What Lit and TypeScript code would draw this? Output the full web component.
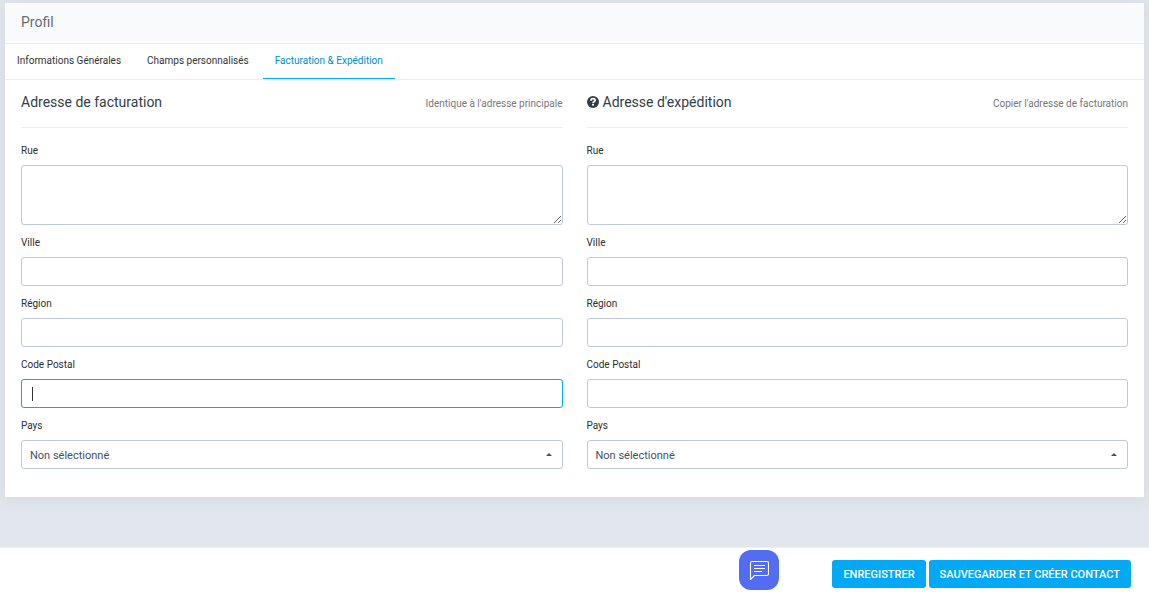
import { LitElement, html, css } from "lit";
import { customElement, property, query, state } from "lit/decorators.js";
import { classMap } from "lit/directives/class-map.js";

const TABS = ["Informations Générales", "Champs personnalisés", "Facturation & Expédition"];

@customElement("address-form")
class AddressForm extends LitElement {
  static styles = css`
    * {
      box-sizing: border-box;
    }
    :host {
      display: block;
      min-width: 0;
    }
    .head {
      display: flex;
      justify-content: space-between;
      align-items: center;
      height: 48px;
      border-bottom: 1px solid #ebeef0;
      margin-bottom: 16px;
    }
    h4 {
      display: flex;
      align-items: center;
      gap: 4px;
      margin: 0;
      padding-bottom: 3px;
      font-size: 14px;
      line-height: 20px;
      font-weight: 400;
      color: #333d47;
    }
    .link {
      font-size: 10px;
      line-height: 20px;
      color: #777;
      text-decoration: none;
    }
    .fields {
      display: grid;
      gap: 11px;
    }
    .field {
      display: grid;
      gap: 7px;
    }
    label {
      font-size: 10px;
      line-height: 14px;
      color: #2d2d2d;
    }
    input,
    textarea,
    select {
      display: block;
      width: 100%;
      height: 29px;
      margin: 0;
      padding: 0 10px;
      border: 1px solid #bfcbd9;
      border-radius: 3px;
      background: #fff;
      color: #494949;
      font: inherit;
      font-size: 12px;
      outline: none;
    }
    textarea {
      height: 60px;
      padding: 6px 10px;
      resize: vertical;
    }
    input:focus,
    textarea:focus,
    select:focus {
      border-color: #03a9f4;
    }
    /* Steady insertion mark while the focused box is still empty. */
    input:focus:placeholder-shown {
      caret-color: transparent;
      background: linear-gradient(#333, #333) 10px center / 1px 14px no-repeat #fff;
    }
    .select {
      display: grid;
      align-items: center;
    }
    .select > * {
      grid-area: 1 / 1;
    }
    select {
      appearance: none;
      padding: 1px 24px 0 8px;
      font-size: 11px;
      color: #415164;
    }
    .caret {
      justify-self: end;
      margin-right: 11px;
      pointer-events: none;
    }
    svg {
      display: block;
    }
  `;

  @property() heading = "";
  @property() action = "";
  @property({ type: Boolean }) help = false;
  @query("#zip") zip!: HTMLInputElement;

  focusZip() {
    this.zip.focus();
  }

  private textField(id: string, label: string) {
    return html`<div class="field">
      <label for=${id}>${label}</label>
      <input id=${id} type="text" placeholder=" " autocomplete="off" />
    </div>`;
  }

  render() {
    return html`
      <div class="head">
        <h4>
          ${this.help
            ? html`<svg width="12" height="12" viewBox="0 0 12 12" aria-hidden="true">
                <circle cx="6" cy="6" r="6" fill="#333d47" />
                <path
                  d="M3.8 4.6C4 3.2 4.9 2.6 6.1 2.6C7.3 2.6 8.1 3.3 8.1 4.3C8.1 5.6 6.2 5.5 6.1 7"
                  fill="none"
                  stroke="#fff"
                  stroke-width="1.8"
                />
                <rect x="5.1" y="7.8" width="1.9" height="1.8" fill="#fff" />
              </svg>`
            : null}
          <span>${this.heading}</span>
        </h4>
        <a class="link" href="#">${this.action}</a>
      </div>
      <div class="fields">
        <div class="field">
          <label for="street">Rue</label>
          <textarea id="street"></textarea>
        </div>
        ${this.textField("city", "Ville")} ${this.textField("state", "Région")}
        ${this.textField("zip", "Code Postal")}
        <div class="field">
          <label for="country">Pays</label>
          <div class="select">
            <select id="country">
              <option>Non sélectionné</option>
            </select>
            <svg class="caret" width="6" height="3" viewBox="0 0 6 3" aria-hidden="true">
              <path d="M0 3L3 0L6 3Z" fill="#415164" />
            </svg>
          </div>
        </div>
      </div>
    `;
  }
}

@customElement("app-root")
class AppRoot extends LitElement {
  static styles = css`
    * {
      box-sizing: border-box;
    }
    :host {
      display: flex;
      flex-direction: column;
      min-height: 100vh;
      background: #e2e7ee;
      font-family: Roboto, "Liberation Sans", sans-serif;
    }
    main {
      flex: 1;
      padding: 3px 5px 50px;
    }
    .card {
      background: #fff;
      box-shadow: 0 1px 15px 1px rgba(90, 90, 90, 0.1);
    }
    h1 {
      margin: 0;
      padding: 9px 16px 11px;
      border-bottom: 1px solid #ebeef0;
      background: #f9fafc;
      font-size: 14px;
      line-height: 20px;
      font-weight: 400;
      color: #6a6c6f;
    }
    .tabs {
      display: flex;
      gap: 2px;
      height: 36px;
      border-bottom: 1px solid #ebeef0;
    }
    .tab {
      padding: 0 12px 2px;
      border: 0;
      border-bottom: 1px solid transparent;
      background: none;
      font: inherit;
      font-size: 10px;
      color: #333;
      cursor: pointer;
    }
    .tab.active {
      border-color: #03a9f4;
      color: #008ece;
    }
    .columns {
      display: grid;
      grid-template-columns: 1fr 1fr;
      gap: 24px;
      padding: 0 16px 28px;
    }
    footer {
      display: flex;
      justify-content: flex-end;
      gap: 3px;
      padding: 12px 18px 9px;
      border-top: 1px solid #edf0f2;
      background: #fff;
    }
    .btn {
      height: 28px;
      padding: 0 11px;
      border: 0;
      border-radius: 3px;
      background: #03a9f4;
      color: #fff;
      font: inherit;
      font-size: 11px;
      font-weight: 500;
      text-transform: uppercase;
      cursor: pointer;
    }
    .chat {
      position: fixed;
      right: 370px;
      bottom: 7px;
      display: grid;
      place-items: center;
      width: 40px;
      height: 40px;
      padding: 0;
      border: 0;
      border-radius: 12px;
      background: #546cf2;
      cursor: pointer;
    }
  `;

  @state() private active = 2;
  @query("address-form") private billing!: AddressForm;

  async firstUpdated() {
    await this.billing.updateComplete;
    this.billing.focusZip();
  }

  render() {
    return html`
      <main>
        <section class="card">
          <h1>Profil</h1>
          <div class="tabs" role="tablist">
            ${TABS.map(
              (name, i) => html`<button
                role="tab"
                aria-selected=${i === this.active}
                class=${classMap({ tab: true, active: i === this.active })}
                @click=${() => (this.active = i)}
              >${name}</button>`
            )}
          </div>
          <div class="columns">
            <address-form
              heading="Adresse de facturation"
              action="Identique à l'adresse principale"
            ></address-form>
            <address-form
              heading="Adresse d'expédition"
              action="Copier l'adresse de facturation"
              help
            ></address-form>
          </div>
        </section>
      </main>
      <footer>
        <button class="btn">Enregistrer</button>
        <button class="btn">Sauvegarder et créer contact</button>
      </footer>
      <button class="chat" aria-label="Chat">
        <svg width="20" height="20" viewBox="0 0 20 20" fill="none" stroke="#fff" stroke-width="1.1">
          <path d="M1.5 19.5V3Q1.5 1.5 3 1.5H18Q19.5 1.5 19.5 3V14Q19.5 15.5 18 15.5H5.5Z" stroke-linejoin="round" />
          <path d="M5 5.5H16M5 8.5H16M5 11.5H13" />
        </svg>
      </button>
    `;
  }
}
